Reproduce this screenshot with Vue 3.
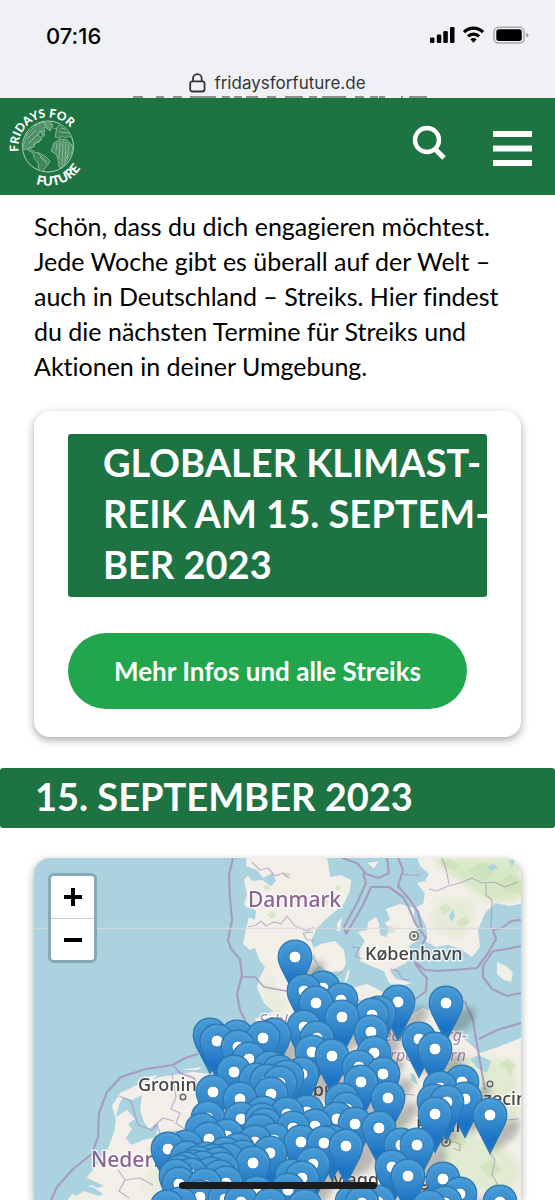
<script setup>
import { computed } from 'vue';

// Each entry is the centre of a marker's white dot: [x, y]
const strikes = [
  [295, 957], [323, 988], [304, 991], [316, 1003], [341, 1000], [342, 1017],
  [398, 1002], [372, 1015], [379, 1013], [304, 1027], [317, 1038], [371, 1032],
  [312, 1052], [332, 1056], [374, 1053], [359, 1067], [361, 1082], [383, 1074],
  [388, 1098], [210, 1035], [217, 1041], [237, 1037], [238, 1047], [274, 1035],
  [263, 1038], [249, 1059], [234, 1072], [270, 1068], [279, 1072], [256, 1080],
  [267, 1081], [287, 1077], [302, 1074], [280, 1083], [213, 1092], [240, 1099],
  [271, 1094], [342, 1100], [347, 1109], [208, 1118], [202, 1130], [241, 1119],
  [263, 1113], [262, 1120], [265, 1125], [260, 1131], [287, 1114], [307, 1112],
  [293, 1128], [315, 1126], [337, 1119], [355, 1124], [379, 1128], [209, 1139],
  [227, 1136], [255, 1142], [274, 1140], [168, 1149], [186, 1147], [187, 1158],
  [301, 1142], [324, 1143], [332, 1142], [346, 1146], [401, 1145], [417, 1145],
  [270, 1153], [253, 1163], [313, 1164], [292, 1176], [392, 1167], [408, 1176],
  [302, 1178], [443, 1179], [460, 1194], [500, 1202], [445, 1203], [429, 1207],
  [378, 1202], [352, 1202], [362, 1203], [257, 1193], [288, 1190], [241, 1202],
  [200, 1197], [180, 1204], [167, 1207], [225, 1199], [270, 1205], [305, 1206],
  [225, 1154], [238, 1150], [243, 1157], [206, 1159], [213, 1161], [218, 1164],
  [228, 1160], [198, 1163], [193, 1167], [203, 1168], [222, 1169], [186, 1169],
  [180, 1172], [176, 1176], [191, 1175], [211, 1174], [220, 1177], [179, 1184],
  [205, 1185], [226, 1183], [419, 1039], [435, 1049], [446, 1003], [462, 1082],
  [440, 1088], [465, 1099], [434, 1101], [447, 1102], [435, 1114], [490, 1115],
];

// Markers further south lie over those further north
const markers = computed(() => [...strikes].sort((a, b) => a[1] - b[1]));
</script>

<template>
  <div class="page">
    <div class="status">
      <span class="time">07:16</span>
      <svg class="status-icons" width="100" height="20" viewBox="0 0 100 20" aria-hidden="true">
        <rect x="0" y="11.500" width="4.500" height="5.500" rx="1.300" />
        <rect x="6.800" y="8.500" width="4.500" height="8.500" rx="1.300" />
        <rect x="13.300" y="5" width="4.500" height="12" rx="1.300" />
        <rect x="20" y="1" width="4.500" height="16" rx="1.300" />
        <g fill="none" stroke="#000" stroke-width="3.200">
          <path d="M34 6.200a13.200 13.200 0 0 1 19 0" />
          <path d="M38 10.400a7.800 7.800 0 0 1 11 0" />
        </g>
        <path d="M40.300 13.300a4.600 4.600 0 0 1 6.400 0l-3.200 3.500z" />
        <rect x="64" y="1.200" width="30" height="15.800" rx="4.500" fill="none" stroke="#a8a9ab" stroke-width="1.500" />
        <rect x="66.300" y="3.300" width="25.500" height="11.600" rx="2.600" />
        <path d="M96 6.800q2.600 .6 2.600 2.400t-2.600 2.400z" fill="#a8a9ab" />
      </svg>
    </div>

    <div class="address">
      <svg width="17" height="20" viewBox="0 0 17 20" fill="none" stroke="#333538" stroke-width="1.800" aria-hidden="true">
        <rect x="1.200" y="8.300" width="14.300" height="10.200" rx="2" />
        <path d="M4 8.300V5.500a4.350 4.350 0 0 1 8.700 0v2.800" />
      </svg>
      <span>fridaysforfuture.de</span>
      <svg class="peek" width="294" height="2" viewBox="0 0 294 2" aria-hidden="true">
        <path
          d="M0 1h10M23 1h8M40 1h9M57 1h26M89 1h8M101 1h8M113 1h12M134 1h9M152 1h18M176 1h8M189 1h24M222 1h9M237 1h8M246 1h6M268 1h2M276 1h18"
          stroke="#8b9491" stroke-width="2"
        />
      </svg>
    </div>

    <header class="header">
      <a class="logo" href="#" aria-label="Fridays for Future">
        <svg width="84" height="84" viewBox="6 105 84 84">
          <defs>
            <path id="arc-top" d="M18.800 151.500A29.500 29.500 0 1 1 77 152" />
            <path id="arc-bottom" d="M36 184A39.500 39.500 0 0 0 87 151" />
            <clipPath id="globe"><circle cx="48" cy="146.500" r="25.300" /></clipPath>
          </defs>
          <text class="logo-text"><textPath href="#arc-top">FRIDAYS FOR</textPath></text>
          <text class="logo-text logo-text-low"><textPath href="#arc-bottom">FUTURE</textPath></text>
          <circle cx="48" cy="146.500" r="25.500" fill="none" stroke="#b5d2c0" stroke-width="1" />
          <g clip-path="url(#globe)" stroke="#a6c9b3" stroke-width=".7" stroke-linejoin="round">
            <path d="M27 134l9-9 7-3 4 3-3 3 1 4-5-1-2 4 4 3-3 4-4 1-1 4-4 1 2 4-5-3-5 1z" fill="#4f9269" />
            <path d="M29 147l5 5 5 1 6 3 5 5-3 5-3 3-1 6-4-5-1-7-4-5-1-5-5-3z" fill="#3e875a" />
            <path d="M44 121l6 0 3 4-3 6-4-3zM53 128l4 1M41 132l4 2-2 3z" fill="#5b9a73" />
            <path d="M57 127l5-4 6 5 6 11-5-3-4 2-3-2-3 2-4-1 1-5z" fill="#3e875a" />
            <path d="M54 143l6-4 7 1 5 5 1 5-3 5-3 6-5 7-3-1-1-8-2-5-5-3z" fill="#4f9269" />
            <path
              d="M27 139l9-9M28 144l13-13M33 145l9-6M38 153l9 9M40 157l7 7M57 143l-1 8M60 141l-1 18M63 141l-1 25M66 142l-1 21M69 144l-2 15M59 132l12 1M61 128l9 2"
              fill="none"
            />
          </g>
        </svg>
      </a>
      <div class="tools">
        <button type="button" aria-label="Suche">
          <svg width="36" height="48" viewBox="0 0 36 48" fill="none" stroke="#fff">
            <circle cx="15" cy="15" r="12" stroke-width="4.400" />
            <path d="M23 24l9 9" stroke-width="5.200" />
          </svg>
        </button>
        <button type="button" aria-label="Menü">
          <svg width="39" height="36" viewBox="0 0 39 36" fill="#fff">
            <path d="M0 0h39v6H0zM0 14.500h39v6H0zM0 29h39v6H0z" />
          </svg>
        </button>
      </div>
    </header>

    <main class="content">
      <p class="intro">
        Schön, dass du dich engagieren möchtest.
        Jede Woche gibt es überall auf der Welt –
        auch in Deutschland – Streiks. Hier findest
        du die nächsten Termine für Streiks und
        Aktionen in deiner Umgebung.
      </p>

      <section class="card">
        <h2 class="banner">GLOBALER KLIMAST-<br>REIK AM 15. SEPTEM-<br>BER 2023</h2>
        <a class="cta" href="#">Mehr Infos und alle Streiks</a>
      </section>

      <h2 class="banner banner-wide">15. SEPTEMBER 2023</h2>

      <section class="map">
        <svg class="tiles" viewBox="34 858 487 342" preserveAspectRatio="xMinYMin slice">
          <defs>
            <linearGradient id="pin-fill" x1="0" y1="0" x2="0" y2="1">
              <stop offset="0" stop-color="#479bd5" />
              <stop offset=".4" stop-color="#378bcd" />
              <stop offset=".75" stop-color="#1b73c5" />
              <stop offset="1" stop-color="#2478c4" />
            </linearGradient>
            <g id="pin">
              <path
                d="M0-16.800C-9.800-16.800-16.800-9.500-16.800 0C-16.800 5-15 9-13 13L0 38.500L13 13C15 9 16.800 5 16.800 0C16.800-9.500 9.800-16.800 0-16.800Z"
                fill="url(#pin-fill)" stroke="#2f77ae" stroke-width="1.200"
              />
              <path d="M-15.200 1A15.200 15.200 0 0 1 15.200 1" fill="none" stroke="#60abdd" stroke-width="1" opacity=".5" />
              <circle r="6" fill="#fff" stroke="#2e7bb9" stroke-width="1" />
            </g>
            <path id="shade" d="M0 38L7 16Q16 2 27 5Q34 11 22 24Z" />
            <filter id="soft" x="-20%" y="-20%" width="140%" height="140%"><feGaussianBlur stdDeviation="3" /></filter>
            <clipPath id="land">
              <path d="M247 850L246 868L251 872L244 880L247 895L244 904L250 912L247 925L243 944L250 950L255 948L260 961L265 967L259 979L257 988L264 1003L273 1011L255 1019L260 1032L255 1044L260 1062L242 1056L230 1069L210 1074L193 1072L160 1077L137 1085L120 1093L112 1106L116 1120L114 1132L109 1146L103 1157L87 1177L93 1184L73 1193L60 1210H540V1033L521 1038L498 1047L480 1053L468 1042L452 1030L440 1014L423 1008L408 1016L394 1022L383 1013L367 1013L362 1003L350 996L340 988L321 990L318 979L308 976L318 966L312 959L314 949L311 941L317 928L327 918L343 905L350 891L351 880L341 875L330 877L328 862L324 850Z" />
              <path d="M415 850L420 866L429 874L425 881L417 883L425 894L423 904L416 907L426 926L427 935L425 941L436 947L448 945L461 949L472 957L480 947L478 930L485 913L495 903L509 906L530 902V850Z" />
              <path d="M358 932L367 930L368 922L376 917L380 925L390 920L386 909L400 904L414 908L414 919L418 927L415 934L418 940L409 946L412 953L406 963L396 968L390 971L396 979L412 983L399 986L389 983L384 971L371 966L360 961L359 950L365 941Z" />
              <path d="M312 949L321 944L335 941L344 950L346 964L342 971L329 972L318 965Z" />
              <path d="M352 988L367 984L383 992L386 1002L372 1006L356 998Z" />
              <path d="M497 962L506 966L513 972L511 982L504 980L497 974Z" />
              <path d="M337 923L342 917L340 931L337 931ZM350 968L348 979L344 984L347 972ZM367 863L379 861L374 868Z" />
              <path d="M113 1104L117 1098L121 1103L117 1110ZM134 1083L151 1076L158 1075L152 1080ZM180 1070L202 1067L198 1070Z" />
            </clipPath>
          </defs>

          <rect x="34" y="858" width="487" height="342" fill="#aad3df" />
          <g clip-path="url(#land)">
            <rect x="34" y="850" width="500" height="360" fill="#f2efe9" />
            <g fill="#d3e7c0" filter="url(#soft)" opacity=".85">
              <path d="M432 858L521 858L521 900L490 902L474 891L455 878L441 866Z" />
              <path d="M430 914L443 899L471 900L476 916L462 938L438 932Z" opacity=".5" />
              <path d="M450 1055L512 1060L521 1113L492 1136L464 1088L430 1060Z" opacity=".7" />
              <path d="M440 1130L496 1140L521 1168L509 1199L440 1175Z" opacity=".7" />
              <path d="M379 1130L402 1119L423 1148L400 1178Z" />
              <path d="M268 972L286 1006L279 1021L262 994Z" opacity=".4" />
              <path d="M154 1140L174 1126L191 1160L172 1200L142 1196Z" opacity=".35" />
            </g>
            <g fill="#c5dfae" opacity=".55">
              <path d="M252 875l5-3 3 4-6 3zM263 886l5-2 2 5-5 1zM284 872l7 2-3 4-5-2zM337 885l5 3-4 3-4-3zM320 901l7-2 1 6-7 1zM267 914l5-3 5 5-6 3zM440 862l8-3 11 5-4 6-9-2zM469 870l14-8 12 7-8 12-10-2zM498 882l12-8 11 6v14l-16-4zM439 908l7-4 6 6-8 4zM456 922l9-6 5 6-10 7zM385 928l7-3 3 7-8 2zM465 1082l9-8 5 9-8 10zM500 1064l8-6 8 8-5 9zM454 1139l8-3 5 8-8 4zM480 1166l12-7 10 11-13 8z" />
            </g>
          </g>

          <g fill="#aad3df">
            <path d="M123 1097L132 1100L142 1095L140 1110L144 1122L149 1129L158 1123L156 1137L143 1140L131 1145L126 1138L132 1129L128 1124L135 1119L127 1110L116 1117L119 1105Z" />
            <path d="M245 866l12 4 6 8 9-5 4 8-5 5-9-6-10 1-6-8zM250 906l6 5-1 9-7-3-4-7zM72 1193l9-8 12 2 10 7-4 2-15-5-8 5zM84 1178l10 3 10 5-6 2-11-5z" />
            <path d="M487 867l6-3 5 4-6 3zM449 916l4-7 2 7-4 6zM509 860l6 0-3 7zM379 925l5-3 5 6-3 9-6-2zM470 1059l8-4 13 6-4 12-10-5zM410 1073l5 2 3 10-6-4zM254 1000l5-6 4 7-4 7zM257 1008l8 2 6 6-12-3z" />
          </g>

          <g fill="none" stroke="#a58fb8" stroke-linejoin="round">
            <g stroke-width="2.200" opacity=".8">
              <path d="M233 858L229 875L230 898L232 920L228 940L231 949L240 959L242 975L237 994L240 1010L246 1022" />
              <path d="M241 977L255 977L264 987L286 991L303 990" stroke-width="1.700" />
              <path d="M51 1200L57 1187L73 1169L92 1154L98 1137L99 1113L107 1092L121 1077L146 1069L173 1065L185 1058L198 1054" />
              <path d="M173 1065L180 1073L194 1078L198 1087" stroke-width="1.600" />
              <path d="M342 858L357 863L366 874L379 878L389 873L387 858M363 873L366 883L357 903L344 927L346 934L363 905L371 887L389 887L403 897L409 908L415 923L426 938L422 945" />
              <path d="M398 858L403 870L398 886L410 900L418 912L422 929M414 961L425 970L438 971L466 969L477 968L488 953L496 939L493 930L502 928L511 921L521 920" />
              <path d="M415 963L422 973L427 978L426 991L413 1001M521 946L507 949L493 951L483 966L483 977L492 989L507 996L521 993" />
              <path d="M446 999L465 1002L473 1020L476 1039L485 1090M479 1039L497 1030L521 1023" />
            </g>
            <g stroke-width="1.200" opacity=".65">
              <path d="M248 927l8-2 5-4 5 5 8-4 7 2 6-8 8 10 12 5 7-4" />
              <path d="M404 875h17M429 889l8 2 11-5 12-3 12-5 10 5 12-1 11 5 13-5M442 858l4 11 3 15M486 882v13l6 5-1 30M403 874l9 1" />
              <path d="M119 1096l12 5 7 24 14 5 5-5 4 11 15-5 11 7M172 1073l4 24-5 12 9 4-4 10 11 8-9 20 5 12-7 10 5 17M118 1170l7 10 15-2 13 7M125 1180l-6 11 10 7M153 1127l10-9 11 3" />
              <path d="M478 1121l10-1 11-5 6 5 14-1M490 1153l5 7-3 15 5 8-7 12M363 1080l16 8 15-3 8 9 13 1M451 1141l9 3 0 7-7-3M386 1184l15-6 9-12" />
              <path d="M252 862l8 8 8-2 7 8 8-3 6 5M314 940l-7 0-4-7 10-1M343 971l-7 5-12-2-3 9M362 959l-7-3 5-8-8-1M390 969l8 2 4 8 8 1" />
            </g>
          </g>

          <path d="M34 928.500H521" stroke="#d7dde0" stroke-width="1.500" opacity=".8" />

          <g class="place">
            <text x="365" y="960">København</text>
            <text x="138" y="1091">Groningen</text>
            <text x="272" y="1096">Hamburg</text>
            <text x="456" y="1105">Szczecin</text>
            <text x="416" y="1132">Berlin</text>
            <text x="330" y="1186">Magdeburg</text>
          </g>
          <g class="country">
            <text x="248" y="907">Danmark</text>
            <text x="91" y="1167">Nederland</text>
          </g>
          <g class="state">
            <text x="259" y="1026">Schleswig-</text>
            <text x="467" y="1041" text-anchor="end">Mecklenburg-</text>
            <text x="466" y="1061" text-anchor="end">Vorpommern</text>
          </g>
          <g fill="#f2efe9" stroke="#666" stroke-width="1.500">
            <circle cx="414" cy="936" r="4.200" />
            <circle cx="414" cy="936" r="1" />
            <circle cx="183" cy="1097" r="2.800" />
            <circle cx="490" cy="1084" r="2.800" />
            <circle cx="446" cy="1142" r="4.200" />
            <circle cx="446" cy="1142" r="1" />
          </g>

          <g filter="url(#soft)" fill="#444" opacity=".32">
            <use v-for="([x, y], i) in markers" :key="i" href="#shade" :x="x" :y="y" />
          </g>
          <use v-for="([x, y], i) in markers" :key="i" href="#pin" :x="x" :y="y" />
        </svg>

        <div class="zoom">
          <button type="button" aria-label="Vergrößern">
            <svg width="18" height="18" viewBox="0 0 18 18"><path d="M0 9h18M9 0v18" stroke="#000" stroke-width="4" /></svg>
          </button>
          <button type="button" aria-label="Verkleinern">
            <svg width="18" height="18" viewBox="0 0 18 18"><path d="M0 9h18" stroke="#000" stroke-width="4" /></svg>
          </button>
        </div>
      </section>
    </main>

    <div class="home-bar"></div>
  </div>
</template>

<style>
body {
  margin: 0;
}
</style>

<style scoped>
.page {
  position: relative;
  display: flex;
  flex-direction: column;
  height: 100vh;
  overflow: hidden;
  background: #fff;
  color: #000;
  font-family: Lato, sans-serif;
  font-variant-ligatures: none;
}

.status {
  display: flex;
  align-items: center;
  justify-content: space-between;
  padding: 22px 25px 0 46px;
  background: #f0f1f4;
  font-family: Inter, sans-serif;
}

.time {
  font-size: 22px;
  font-weight: 500;
  line-height: 28px;
}

.address {
  position: relative;
  display: flex;
  align-items: center;
  justify-content: center;
  gap: 8px;
  padding: 21px 0 3px;
  background: #f0f1f4;
  color: #333538;
  font-family: Inter, sans-serif;
  font-size: 17px;
  line-height: 24px;
}

/* Tops of the page heading that scrolled under the address bar */
.peek {
  position: absolute;
  bottom: 0;
  left: 24%;
}

.header {
  display: flex;
  align-items: center;
  justify-content: space-between;
  height: 97px;
  padding: 0 23px 0 6px;
  background: #1d7341;
}

.logo {
  display: flex;
}

.logo-text {
  fill: #fff;
  font-size: 12px;
  font-weight: 900;
}

.logo-text-low {
  font-size: 13px;
}

.tools {
  display: flex;
  align-items: center;
  gap: 45px;
  padding-top: 4px;
}

button {
  display: flex;
  align-items: center;
  justify-content: center;
  padding: 0;
  border: 0;
  background: none;
  cursor: pointer;
}

.content {
  display: flex;
  flex: 1;
  flex-direction: column;
  min-height: 0;
}

.intro {
  margin: 14px 34px 27px;
  font-size: 25px;
  line-height: 35px;
}

.card {
  margin: 0 34px;
  padding: 23px 34px 28px;
  border-radius: 16px;
  box-shadow: 0 3px 8px rgba(0, 0, 0, 0.35);
}

.banner {
  margin: 0;
  padding: 3px 0 7px 35px;
  border-radius: 3px;
  background: #1d7341;
  color: #fff;
  font-size: 38px;
  font-weight: 700;
  line-height: 51px;
  white-space: nowrap;
}

.cta {
  display: inline-block;
  margin-top: 36px;
  padding: 20px 46px;
  border-radius: 38px;
  background: #21a64d;
  color: #fff;
  font-size: 26px;
  font-weight: 700;
  line-height: 36px;
  text-decoration: none;
  white-space: nowrap;
}

.banner-wide {
  margin: 31px 0 30px;
  padding-bottom: 6px;
}

.map {
  position: relative;
  flex: 1;
  min-height: 0;
  margin: 0 34px;
  border-radius: 16px 16px 0 0;
  box-shadow: 0 3px 8px rgba(0, 0, 0, 0.35);
}

.tiles {
  display: block;
  width: 100%;
  height: 100%;
  border-radius: 16px 16px 0 0;
}

.place,
.country,
.state {
  font-family: "Noto Sans", sans-serif;
  paint-order: stroke;
  stroke: rgba(255, 255, 255, 0.7);
  stroke-width: 3px;
}

.place {
  fill: #454545;
  font-size: 18px;
  font-weight: 500;
}

.country {
  fill: #8a6592;
  font-size: 21px;
  font-weight: 500;
}

.state {
  fill: #a386ad;
  font-size: 16px;
  font-style: italic;
}

.zoom {
  position: absolute;
  top: 15px;
  left: 14px;
  overflow: hidden;
  border: 3px solid #86aab3;
  border-radius: 6px;
}

.zoom button {
  width: 43px;
  height: 42px;
  background: #fff;
}

.zoom button + button {
  border-top: 1px solid #ccc;
}

.home-bar {
  position: absolute;
  bottom: 11px;
  left: 50%;
  width: 198px;
  height: 7px;
  margin-left: -99px;
  border-radius: 4px;
  background: #1c1c1c;
}
</style>
